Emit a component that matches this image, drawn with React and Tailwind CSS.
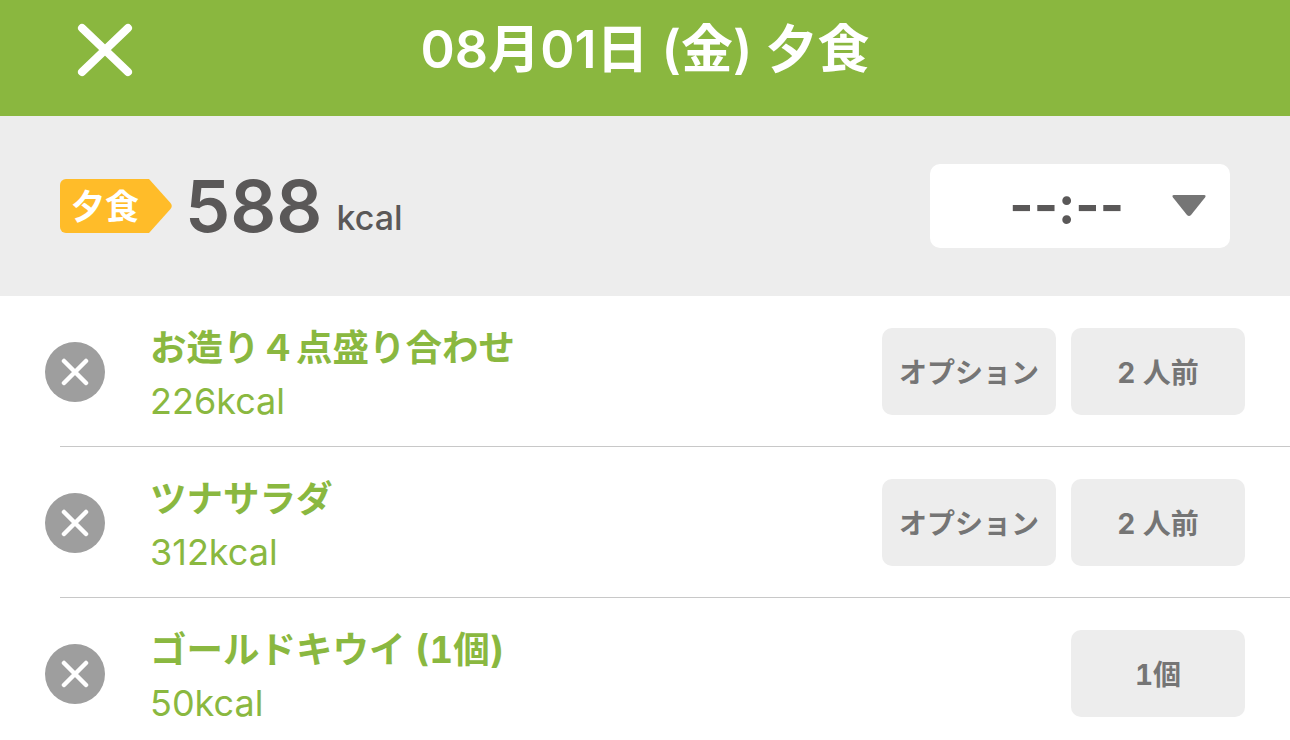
const FONT = 'font-["Inter","Noto_Sans_CJK_JP",sans-serif]';

const meals = [
    { name: 'お造り４点盛り合わせ', kcal: '226kcal', option: true, amount: '2 人前' },
    { name: 'ツナサラダ', kcal: '312kcal', option: true, amount: '2 人前' },
    { name: 'ゴールドキウイ (1個)', kcal: '50kcal', option: false, amount: '1個' },
];

const SmallButton = ({ children }) => (
    <div className="flex h-[87px] w-[174px] items-center justify-center rounded-[10px] bg-[#ededed] pt-[2px] text-[28px] font-bold text-[#757575] tabular-nums">
        {children}
    </div>
);

const MealRow = ({ meal }) => (
    <div className="ml-[60px] h-[151px] border-b border-[#c8c8c8]">
        <div className="-ml-[15px] flex items-center pt-8 pr-[45px]">
            <div className="flex h-[60px] w-[60px] shrink-0 items-center justify-center rounded-full bg-[#9e9e9e]">
                <svg width="28" height="28" viewBox="0 0 28 28" fill="none" stroke="#fff" strokeWidth="4.5" strokeLinecap="round">
                    <path d="M3 3 L25 25 M25 3 L3 25" />
                </svg>
            </div>
            <div className="-mt-[1px] ml-[45px] -mb-[7px] flex-1 text-[#8ab840]">
                <div className="text-[36.5px] leading-[40px] font-bold tabular-nums">{meal.name}</div>
                <div className="mt-[13px] text-[36px] leading-[40px]">{meal.kcal}</div>
            </div>
            <div className="flex gap-[15px]">
                {meal.option && <SmallButton>オプション</SmallButton>}
                <SmallButton>{meal.amount}</SmallButton>
            </div>
        </div>
    </div>
);

export default function App() {
    return (
        <div className={`h-[740px] overflow-hidden bg-white ${FONT}`}>
            <header className="relative flex h-[116px] items-center justify-center bg-[#8ab73f] pb-[16px]">
                <svg className="absolute top-[23px] left-[77px]" width="56" height="54" viewBox="0 0 56 54" fill="none" stroke="#fff" strokeWidth="8" strokeLinecap="round">
                    <path d="M5 5 L51 49 M51 5 L5 49" />
                </svg>
                <h1 className="text-[52px] font-semibold text-white">08月01日 (金) 夕食</h1>
            </header>

            <section className="flex h-[180px] items-center justify-between bg-[#ededed] pr-[60px] pl-[60px]">
                <div className="flex items-center">
                    <div className="flex h-[54px] items-center">
                        <div className="flex h-[54px] w-[89px] items-center justify-center rounded-l-[6px] bg-[#ffbc29] pl-[1px] text-[34px] font-bold text-white">
                            夕食
                        </div>
                        <svg width="23" height="54" viewBox="0 0 23 54" fill="#ffbc29">
                            <path d="M0 0 L21.5 24 Q24 27 21.5 30 L0 54 Z" />
                        </svg>
                    </div>
                    <span className="ml-[13px] text-[72px] leading-none font-semibold text-[#5a5858]">588</span>
                    <span className="mt-[22px] ml-[14px] text-[34px] font-medium text-[#5a5858]">kcal</span>
                </div>
                <div className="relative flex h-[84px] w-[300px] items-center justify-end rounded-[10px] bg-white pr-[106px]">
                    <span className="text-[52px] leading-none font-bold text-[#5a5858]">--:--</span>
                    <svg className="absolute top-[31px] left-[242px]" width="34" height="22" viewBox="0 0 34 22" fill="#757575">
                        <path d="M2 0 H32 Q34.5 0 33 2.5 L19 20 Q17 22 15 20 L1 2.5 Q-0.5 0 2 0 Z" />
                    </svg>
                </div>
            </section>

            <main>
                {meals.map((meal) => (
                    <MealRow key={meal.name} meal={meal} />
                ))}
            </main>
        </div>
    );
}
